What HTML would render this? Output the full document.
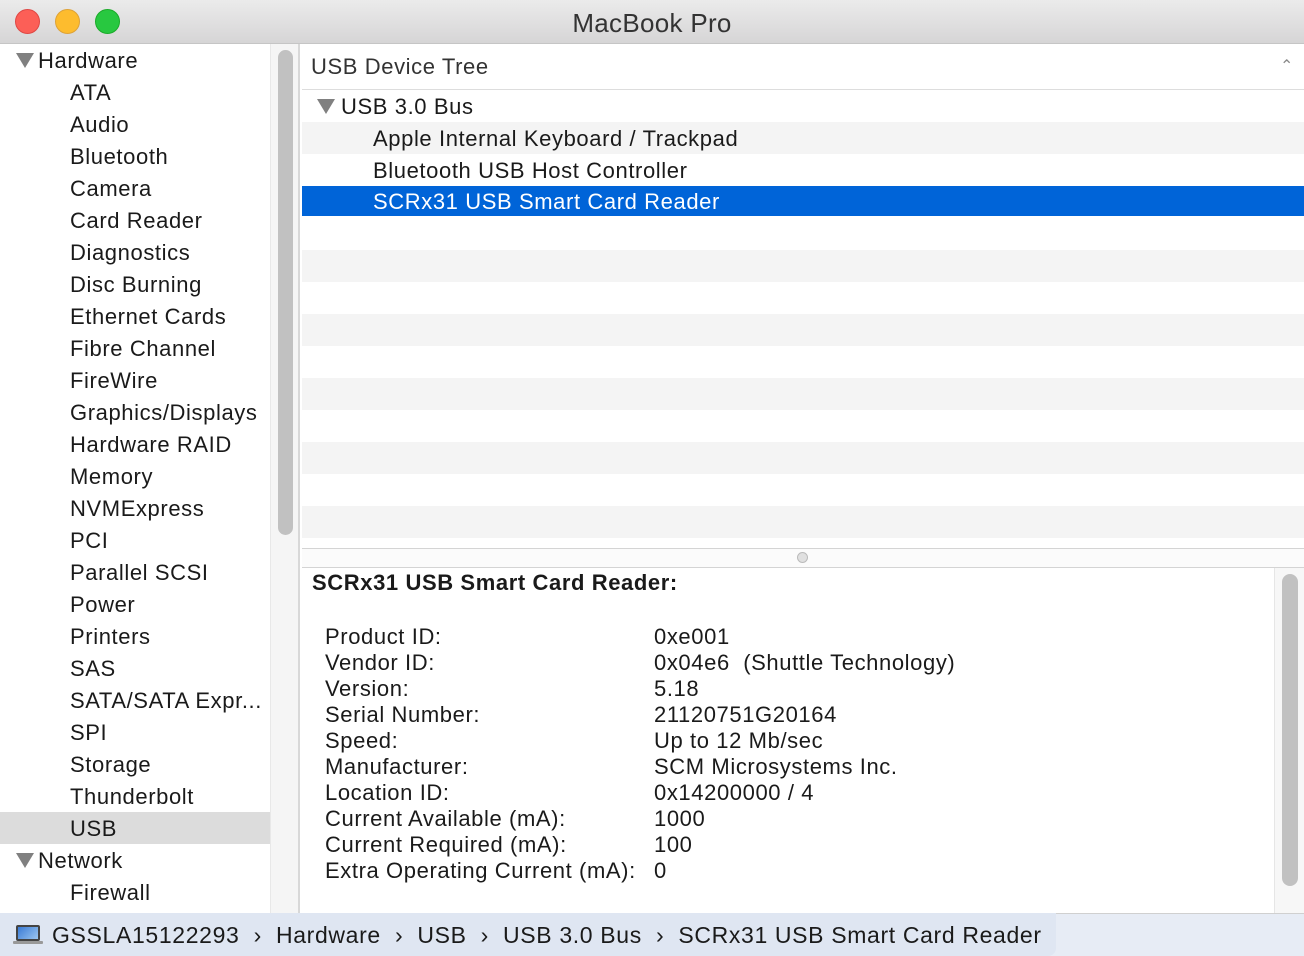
<!DOCTYPE html>
<html><head><meta charset="utf-8"><style>
*{margin:0;padding:0;box-sizing:border-box}
body{width:1304px;height:956px;overflow:hidden;background:#fff;font-family:"Liberation Sans",sans-serif;color:#1a1a1a;position:relative;font-size:22px;letter-spacing:0.6px}
.abs{position:absolute}
.title{left:0;top:0;width:1304px;height:44px;background:linear-gradient(#ebebeb,#d6d5d6);border-bottom:1px solid #c5c5c5;text-align:center;line-height:46px;font-size:26px;color:#333;letter-spacing:0.3px}
.dot{width:25px;height:25px;border-radius:50%;top:9px}
.side{left:0;top:44px;width:270px;height:869px;background:#fff}
.side div{position:absolute;left:70px;height:32px;line-height:34px;white-space:nowrap}
.tri{width:0;height:0;border-left:9px solid transparent;border-right:9px solid transparent;border-top:15px solid #808080;position:absolute}
.row{left:302px;width:1002px;height:32px;line-height:34px;position:absolute;white-space:nowrap}
.dl{position:absolute;left:325px;white-space:nowrap}
.dv{position:absolute;left:654px;white-space:nowrap}
</style></head><body>
<div class="abs title">MacBook Pro</div>
<div class="abs dot" style="left:15px;background:#fc5f57;border:1px solid #df4744"></div>
<div class="abs dot" style="left:55px;background:#fdbc2e;border:1px solid #dea236"></div>
<div class="abs dot" style="left:95px;background:#28c840;border:1px solid #1aab29"></div>
<div class="abs side">
<div style="top:768px;left:0;width:270px;background:#dcdcdc"></div>
<span class="tri" style="left:16px;top:9px"></span>
<div style="left:38px;top:0">Hardware</div>
<div style="top:32px">ATA</div><div style="top:64px">Audio</div><div style="top:96px">Bluetooth</div><div style="top:128px">Camera</div><div style="top:160px">Card Reader</div><div style="top:192px">Diagnostics</div><div style="top:224px">Disc Burning</div><div style="top:256px">Ethernet Cards</div><div style="top:288px">Fibre Channel</div><div style="top:320px">FireWire</div><div style="top:352px">Graphics/Displays</div><div style="top:384px">Hardware RAID</div><div style="top:416px">Memory</div><div style="top:448px">NVMExpress</div><div style="top:480px">PCI</div><div style="top:512px">Parallel SCSI</div><div style="top:544px">Power</div><div style="top:576px">Printers</div><div style="top:608px">SAS</div><div style="top:640px">SATA/SATA Expr...</div><div style="top:672px">SPI</div><div style="top:704px">Storage</div><div style="top:736px">Thunderbolt</div><div style="top:768px">USB</div>
<span class="tri" style="left:16px;top:809px"></span>
<div style="left:38px;top:800px">Network</div>
<div style="top:832px">Firewall</div>
</div>
<div class="abs" style="left:270px;top:44px;width:30px;height:869px;background:#f5f5f5;border-left:1px solid #e8e8e8;border-right:2px solid #d8d8d8"></div>
<div class="abs" style="left:278px;top:50px;width:15px;height:485px;border-radius:8px;background:#c1c1c1"></div>
<div class="abs" style="left:302px;top:44px;width:1002px;height:46px;border-bottom:1px solid #ddd;line-height:46px;padding-left:9px;color:#333">USB Device Tree<span style="position:absolute;right:10px;top:0;color:#888;font-size:16px">&#8963;</span></div>
<div class="row" style="top:122px;background:#f4f4f4"></div>
<div class="row" style="top:250px;background:#f4f4f4"></div>
<div class="row" style="top:314px;background:#f4f4f4"></div>
<div class="row" style="top:378px;background:#f4f4f4"></div>
<div class="row" style="top:442px;background:#f4f4f4"></div>
<div class="row" style="top:506px;background:#f4f4f4"></div>
<span class="tri" style="left:317px;top:99px"></span>
<div class="row" style="top:90px;padding-left:39px">USB 3.0 Bus</div>
<div class="row" style="top:122px;padding-left:71px">Apple Internal Keyboard / Trackpad</div>
<div class="row" style="top:154px;padding-left:71px">Bluetooth USB Host Controller</div>
<div class="row" style="top:186px;height:30px;line-height:32px;padding-left:71px;background:#0064d8;color:#fff">SCRx31 USB Smart Card Reader</div>
<div class="abs" style="left:302px;top:548px;width:1002px;height:20px;background:#fbfbfb;border-top:1px solid #d4d4d4;border-bottom:1px solid #d4d4d4"></div>
<div class="abs" style="left:797px;top:552px;width:11px;height:11px;border-radius:50%;background:#e0e0e0;border:1px solid #bbb"></div>
<div class="abs" style="left:1274px;top:568px;width:30px;height:345px;background:#f7f7f7;border-left:1px solid #e6e6e6"></div>
<div class="abs" style="left:1282px;top:574px;width:16px;height:312px;border-radius:8px;background:#c1c1c1"></div>
<div class="abs" style="left:312px;top:570px;font-weight:bold">SCRx31 USB Smart Card Reader:</div>
<div class="dl" style="top:624px">Product ID:</div><div class="dv" style="top:624px">0xe001</div>
<div class="dl" style="top:650px">Vendor ID:</div><div class="dv" style="top:650px">0x04e6 &nbsp;(Shuttle Technology)</div>
<div class="dl" style="top:676px">Version:</div><div class="dv" style="top:676px">5.18</div>
<div class="dl" style="top:702px">Serial Number:</div><div class="dv" style="top:702px">21120751G20164</div>
<div class="dl" style="top:728px">Speed:</div><div class="dv" style="top:728px">Up to 12 Mb/sec</div>
<div class="dl" style="top:754px">Manufacturer:</div><div class="dv" style="top:754px">SCM Microsystems Inc.</div>
<div class="dl" style="top:780px">Location ID:</div><div class="dv" style="top:780px">0x14200000 / 4</div>
<div class="dl" style="top:806px">Current Available (mA):</div><div class="dv" style="top:806px">1000</div>
<div class="dl" style="top:832px">Current Required (mA):</div><div class="dv" style="top:832px">100</div>
<div class="dl" style="top:858px">Extra Operating Current (mA):</div><div class="dv" style="top:858px">0</div>
<div class="abs" style="left:0;top:913px;width:1304px;height:43px;background:#e7ecf5;border-top:1px solid #d0d0d0"></div>
<div class="abs" style="left:0;top:913px;width:1056px;height:43px;background:#dfe6f2;border-radius:0 0 8px 0"></div>
<div class="abs" style="left:16px;top:925px;width:24px;height:16px;background:linear-gradient(135deg,#3a7bd5,#9cc6f0);border:2px solid #444;border-radius:2px"></div>
<div class="abs" style="left:13px;top:941px;width:30px;height:3px;background:#999;border-radius:1px"></div>
<div class="abs" style="left:52px;top:922px;font-size:23px;white-space:nowrap;letter-spacing:0.65px">GSSLA15122293 &nbsp;›&nbsp; Hardware &nbsp;›&nbsp; USB &nbsp;›&nbsp; USB 3.0 Bus &nbsp;›&nbsp; SCRx31 USB Smart Card Reader</div>
</body></html>
